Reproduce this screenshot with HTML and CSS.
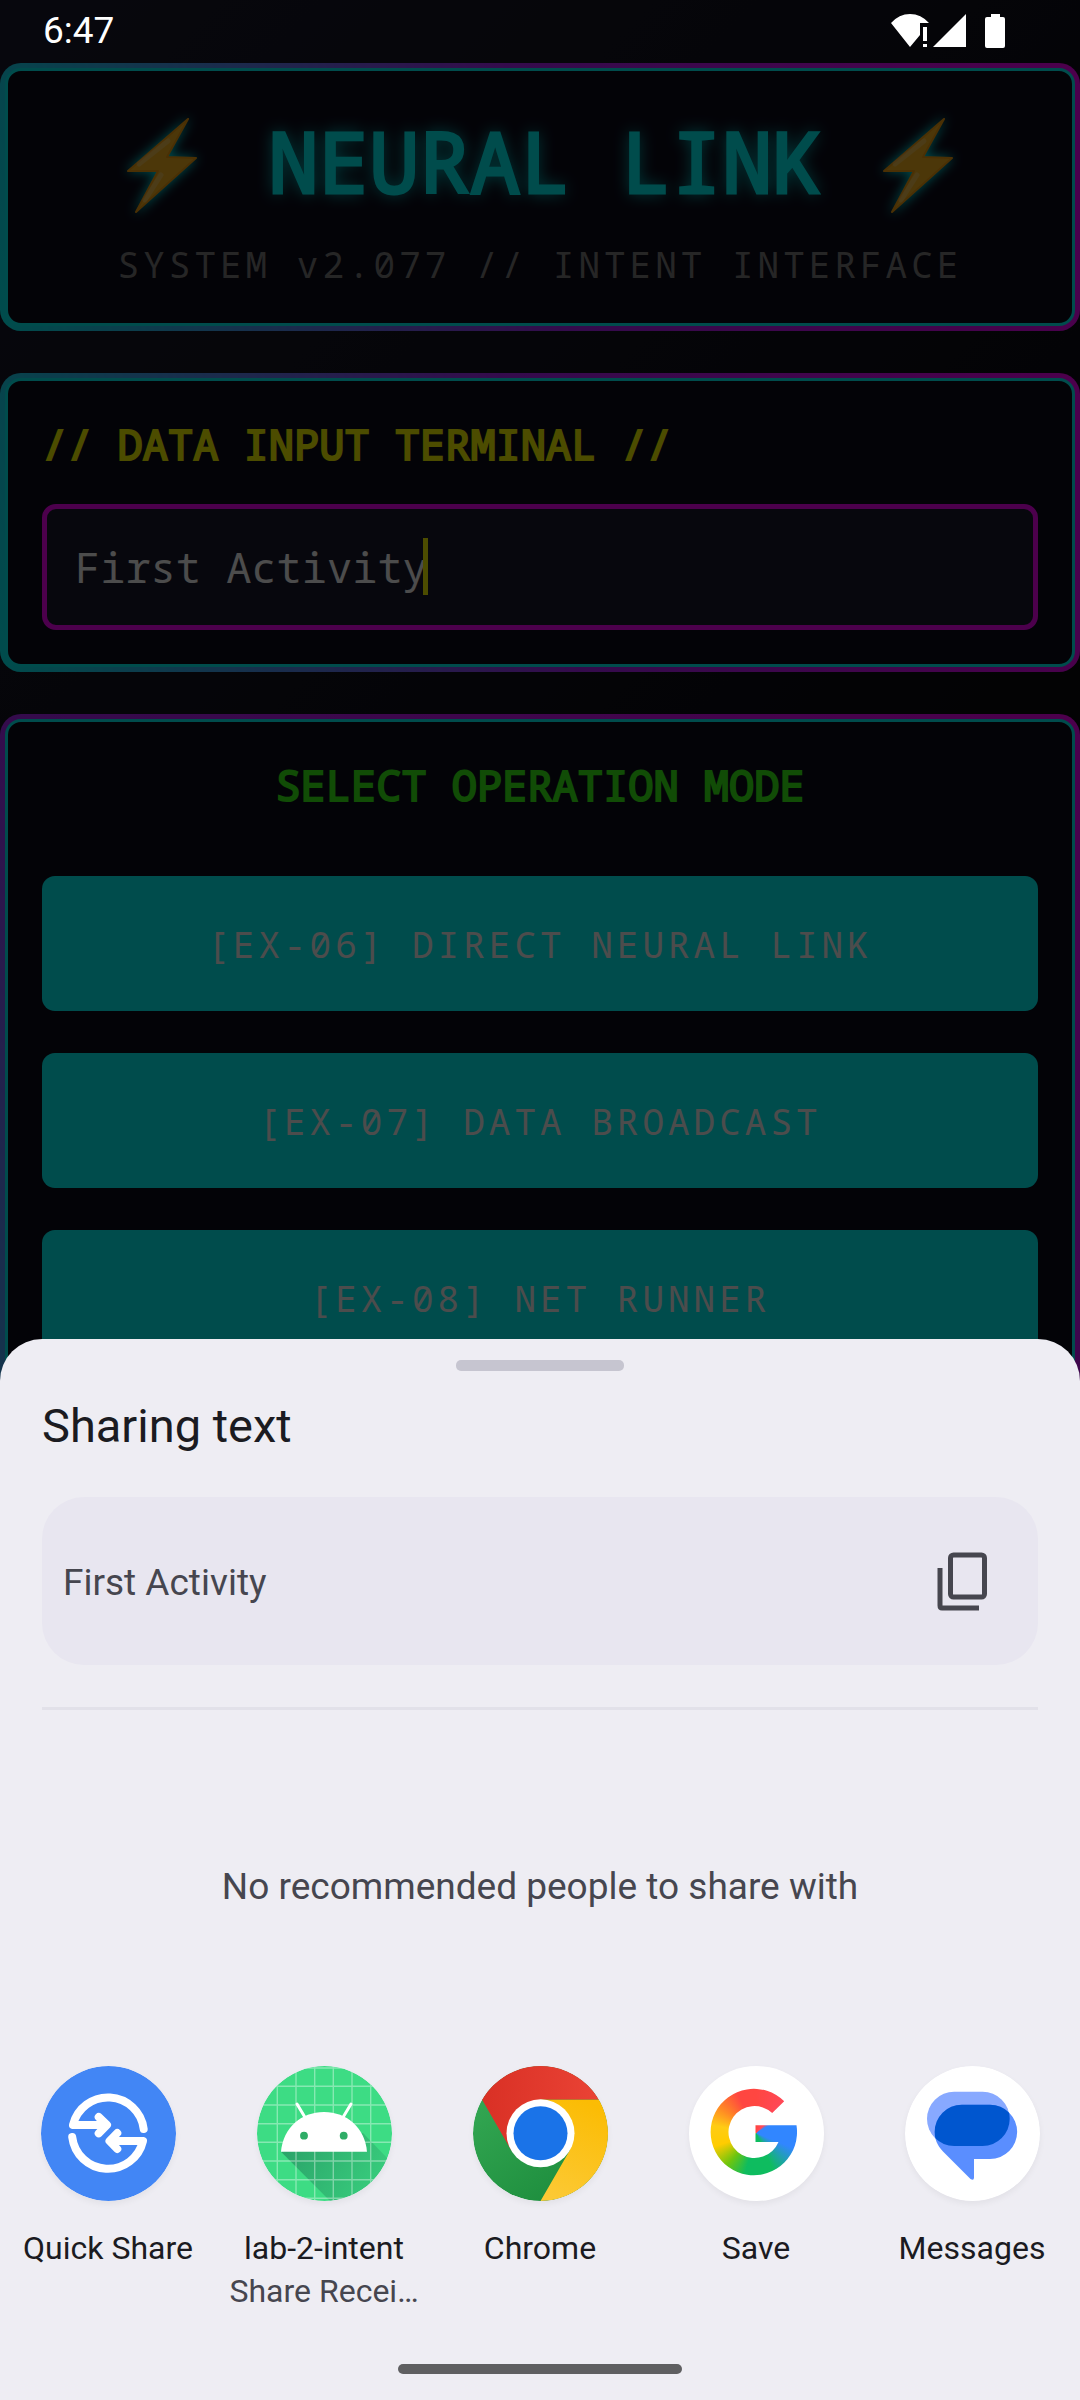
FILE: index.html
```html
<!DOCTYPE html>
<html lang="en">
<head>
<meta charset="utf-8">
<meta name="viewport" content="width=device-width, initial-scale=1">
<title>Neural Link</title>
<link rel="stylesheet" href="styles.css">
</head>
<body>
<header class="status">
  <span class="clock">6:47</span>
  <span class="status-icons">
    <svg width="38" height="34" viewBox="0 0 38 34" fill="#fff" aria-hidden="true"><path d="M0 9Q8 0 19 0T38 9H29V21L19 33Z"/><path d="M32 13h4v14h-4zM32 30h4v3h-4z"/></svg>
    <svg class="signal" width="33" height="34" viewBox="0 0 33 34" fill="#fff" aria-hidden="true"><path d="M33 0V33H0Z"/></svg>
    <svg width="20" height="34" viewBox="0 0 20 34" fill="#fff" aria-hidden="true"><path d="M6 0h9v3h3q2 0 2 2v27q0 2-2 2H2q-2 0-2-2V5q0-2 2-2h4z"/></svg>
  </span>
</header>

<main class="app">
  <section class="card card-title"><div class="card-body">
    <h1 class="title">
      <svg class="bolt" viewBox="0 0 104 104" aria-hidden="true"><path d="M78 5 18 57H48L26 98 86 44 57 43Z" fill="#ffba20" stroke="#f9a010" stroke-width="2" stroke-linejoin="round"/><path d="M29 50 58 27M51 61 35 86" stroke="#fff" stroke-opacity=".22" stroke-width="5" stroke-linecap="round"/></svg>
      <span class="title-text">NEURAL LINK</span>
      <svg class="bolt" viewBox="0 0 104 104" aria-hidden="true"><path d="M78 5 18 57H48L26 98 86 44 57 43Z" fill="#ffba20" stroke="#f9a010" stroke-width="2" stroke-linejoin="round"/><path d="M29 50 58 27M51 61 35 86" stroke="#fff" stroke-opacity=".22" stroke-width="5" stroke-linecap="round"/></svg>
    </h1>
    <p class="subtitle">SYSTEM v2.077 // INTENT INTERFACE</p>
  </div></section>

  <section class="card card-input"><div class="card-body">
    <label class="heading" for="data">// DATA INPUT TERMINAL //</label>
    <div class="field"><input id="data" type="text" value="First Activity"><span class="caret"></span></div>
  </div></section>

  <section class="card card-modes"><div class="card-body">
    <h2 class="heading heading-modes">SELECT OPERATION MODE</h2>
    <div class="modes">
      <button class="mode" type="button">[EX-06] DIRECT NEURAL LINK</button>
      <button class="mode" type="button">[EX-07] DATA BROADCAST</button>
      <button class="mode" type="button">[EX-08] NET RUNNER</button>
    </div>
  </div></section>
</main>

<div class="scrim"></div>

<section class="sheet" role="dialog" aria-labelledby="sheet-title">
  <div class="handle"></div>
  <h2 class="sheet-title" id="sheet-title">Sharing text</h2>
  <div class="preview">
    <span>First Activity</span>
    <button class="copy" type="button" aria-label="Copy">
      <svg width="50" height="59" viewBox="0 0 50 59" fill="none" stroke="#46464f" stroke-width="5" aria-hidden="true"><rect x="13.500" y="3" width="34" height="42" rx="3"/><path d="M3 16V53.500Q3 56 5 56H42"/></svg>
    </button>
  </div>
  <hr class="divider">
  <p class="empty">No recommended people to share with</p>
  <nav class="apps">
    <a class="target" href="#">
      <svg class="icon" viewBox="0 0 135 135" aria-hidden="true"><circle cx="67.500" cy="67.500" r="67.500" fill="#4286f5"/><g fill="none" stroke="#fff" stroke-width="8" stroke-linecap="round" stroke-linejoin="round"><path d="M102.700 63A36 36 0 0 0 32 59H65M57.700 51 66 59 57.700 67.300"/><path d="M31.200 71A36 36 0 0 0 102 75H70M76.300 67 68.500 75 76.300 83"/></g></svg>
      <span class="name">Quick Share</span>
    </a>
    <a class="target" href="#">
      <svg class="icon" viewBox="0 0 135 135" aria-hidden="true"><defs><clipPath id="disc"><circle cx="67.500" cy="67.500" r="67.500"/></clipPath><linearGradient id="shade" x1="35" y1="75" x2="115" y2="125" gradientUnits="userSpaceOnUse"><stop offset="0" stop-color="#1f7f58" stop-opacity=".6"/><stop offset="1" stop-color="#1f7f58" stop-opacity=".18"/></linearGradient></defs><g clip-path="url(#disc)"><path fill="#3ddc84" d="M0 0h135v135H0z"/><path d="M24 85.700 75 137H135V97L106 67Z" fill="url(#shade)"/><path d="M20.300 0V135M39 0V135M57.700 0V135M76.300 0V135M95 0V135M113.700 0V135M0 2H135M0 20.300H135M0 39H135M0 57.700H135M0 76.300H135M0 95H135M0 113.700H135M0 132.300H135" stroke="#fff" stroke-opacity=".38" stroke-width="1.400"/><path d="M24 85.700C26 62 44 46 67 46S108 62 110 85.700Z" fill="#fff"/><path d="M40 38 49 53M94 38 85 53" stroke="#fff" stroke-width="3" stroke-linecap="round"/><circle cx="47" cy="69.700" r="3.900" fill="#2fad67"/><circle cx="86.700" cy="69.700" r="3.900" fill="#2fad67"/></g></svg>
      <span class="name">lab-2-intent</span>
      <span class="detail">Share Recei…</span>
    </a>
    <a class="target" href="#">
      <svg class="icon" viewBox="0 0 135 135" aria-hidden="true"><defs><linearGradient id="red"><stop offset="0" stop-color="#d93025"/><stop offset="1" stop-color="#ea4335"/></linearGradient><linearGradient id="yellow" x1=".6" y1="0" x2=".3" y2="1"><stop offset="0" stop-color="#fbbc04"/><stop offset="1" stop-color="#fcc934"/></linearGradient><linearGradient id="green" x1="0" y1=".2" x2=".6" y2="1"><stop offset="0" stop-color="#34a853"/><stop offset="1" stop-color="#1e8e3e"/></linearGradient></defs><circle cx="67.500" cy="67.500" r="67.500" fill="url(#green)"/><path d="M67.500 33.500H126A67.500 67.500 0 0 1 67.500 135L97 84Z" fill="url(#yellow)"/><path d="M67.500 33.500H126A67.500 67.500 0 0 0 9 33.500L38.300 84.500 67.500 67Z" fill="url(#red)"/><circle cx="67.500" cy="67.300" r="34" fill="#fff"/><circle cx="67.500" cy="67.300" r="27" fill="#1a73e8"/></svg>
      <span class="name">Chrome</span>
    </a>
    <a class="target" href="#">
      <span class="icon icon-save"><span class="g-mark"></span></span>
      <span class="name">Save</span>
    </a>
    <a class="target" href="#">
      <svg class="icon" viewBox="0 0 135 135" aria-hidden="true"><defs><clipPath id="bubble"><rect x="22" y="25.700" width="82.700" height="54.300" rx="27.150"/></clipPath></defs><circle cx="67.500" cy="67.500" r="67.500" fill="#fff"/><rect x="22" y="25.700" width="82.700" height="54.300" rx="27.150" fill="#88a9ff"/><path d="M56.800 38.700H85A27.100 27.100 0 0 1 85 93H69V111.500Q69 115 65.500 113L38 85.500C32 79 29.700 73 29.700 66A27.200 27.200 0 0 1 56.800 38.700Z" fill="#5a8eff"/><path clip-path="url(#bubble)" d="M56.800 38.700H85A27.100 27.100 0 0 1 85 93H69L38 85.500C32 79 29.700 73 29.700 66A27.200 27.200 0 0 1 56.800 38.700Z" fill="#0056cf"/></svg>
      <span class="name">Messages</span>
    </a>
  </nav>
  <div class="home-bar"></div>
</section>
</body>
</html>
```
FILE: styles.css
```css
* { box-sizing: border-box; }

body {
  margin: 0;
  min-height: 100vh;
  position: relative;
  overflow: hidden;
  background: linear-gradient(135deg, #1a1a2e, #0a0a0f 50%);
  font-family: Roboto, sans-serif;
}

h1, h2, p { margin: 0; }

button, input { font: inherit; border: 0; padding: 0; }

.status {
  position: relative;
  z-index: 2;
  display: flex;
  justify-content: space-between;
  height: 63px;
  padding: 14px 75px 0 43px;
  color: #fff;
}

.clock { font-size: 37px; line-height: 34px; }

.status-icons { display: flex; gap: 4px; }
.signal { margin-right: 15px; }

.app {
  display: flex;
  flex-direction: column;
  gap: 42px;
  font-family: "Droid Sans Mono", "Noto Sans Mono", "DejaVu Sans Mono", monospace;
}

.card { padding: 5px; border-radius: 21px; }
.card-title { background: linear-gradient(76deg, #0ff, #b026ff, #f0f); }
.card-input { background: linear-gradient(75deg, #0ff, #b026ff, #f0f); }
.card-modes { background: linear-gradient(45deg, #0ff, #b026ff, #f0f); }

.card-body {
  display: flex;
  flex-direction: column;
  padding: 34px;
  border: 3px solid #0ff;
  border-radius: 16px;
  background: #0d0b1a;
}

.card-title .card-body { align-items: center; }

.title {
  display: flex;
  align-items: center;
  gap: 50px;
  height: 110px;
  font-size: 84px;
  font-weight: 400;
  color: #0ff;
  text-shadow: 0 0 16px #0ff;
  -webkit-text-stroke: 3px #0ff;
}

.title-text { margin: 0 -7px 0 4px; }

.bolt {
  width: 104px;
  height: 104px;
  margin-top: 12px;
  filter: drop-shadow(0 0 6px #0ff);
}

.subtitle {
  margin-top: 26px;
  font-size: 36px;
  line-height: 48px;
  letter-spacing: 4px;
  color: #808080;
}

.heading {
  padding-top: 1px;
  font-size: 42px;
  font-weight: 400;
  line-height: 56px;
  color: #ff0;
  -webkit-text-stroke: 2px #ff0;
}

.heading-modes {
  text-align: center;
  color: #39ff14;
  -webkit-text-stroke-color: #39ff14;
}

.field {
  display: flex;
  align-items: center;
  height: 126px;
  margin-top: 32px;
  padding: 0 28px 2px;
  border: 5px solid #f0f;
  border-radius: 14px;
  background: #1a1a2e;
}

.field input {
  width: 14ch;
  font-size: 42px;
  color: #fff;
  background: none;
  outline: 0;
}

.caret {
  width: 5px;
  height: 57px;
  margin-left: -5px;
  background: #ff0;
}

.card-modes .card-body { padding-bottom: 400px; }

.modes {
  display: flex;
  flex-direction: column;
  gap: 42px;
  margin-top: 63px;
}

.mode {
  height: 135px;
  padding-top: 2px;
  border-radius: 13px;
  background: #0ff;
  color: #fff;
  font-size: 36px;
  letter-spacing: 4px;
}

.scrim {
  position: absolute;
  inset: 0;
  background: rgba(0, 0, 0, .7);
}

.sheet {
  position: absolute;
  inset: auto 0 0;
  z-index: 3;
  display: flex;
  flex-direction: column;
  padding-top: 21px;
  border-radius: 42px 42px 0 0;
  background: #eeedf3;
  color: #1b1b21;
}

.handle {
  align-self: center;
  width: 168px;
  height: 11px;
  border-radius: 5px;
  background: #c6c5d0;
}

.sheet-title {
  margin: 27px 42px 0;
  font-size: 47px;
  font-weight: 400;
  line-height: 56px;
}

.preview {
  display: flex;
  align-items: center;
  justify-content: space-between;
  height: 168px;
  margin: 43px 42px 0;
  padding: 0 51px 0 21px;
  border-radius: 42px;
  background: #e8e6f0;
  color: #46464f;
  font-size: 37px;
}

.preview span { padding-top: 2px; }

.copy { background: none; }
.copy svg { display: block; }

.divider {
  height: 3px;
  margin: 42px 42px 0;
  border: 0;
  background: #e2e1e9;
}

.empty {
  margin-top: 155px;
  font-size: 37px;
  line-height: 44px;
  text-align: center;
  color: #46464f;
}

.apps {
  display: grid;
  grid-template-columns: repeat(5, 1fr);
  margin-top: 157px;
}

.target {
  display: flex;
  flex-direction: column;
  align-items: center;
  color: #1b1b21;
  font-size: 32px;
  line-height: 43px;
  text-decoration: none;
  white-space: nowrap;
}

.icon {
  width: 135px;
  height: 135px;
  margin-bottom: 26px;
  border-radius: 50%;
  box-shadow: 0 3px 6px rgba(0, 0, 0, .05);
}

.icon-save { background: #fff; }

.g-mark {
  display: block;
  width: 135px;
  height: 135px;
  background: conic-gradient(from 0deg at 67px 67px, #ff4641 0deg, #ff4858 45deg, #3186ff 60deg, #3186ff 112deg, #0ebc5f 155deg, #0ebc5f 195deg, #6cc50f 222deg, #fc0 252deg, #ffcc14 280deg, #ff8a24 305deg, #ff4641 335deg);
  clip-path: path("M95.700 35.300L83.700 47A26 26 0 1 0 90 76H67V59.300H108A43.200 43.200 0 1 1 95.700 35.300Z");
}

.detail { color: #46464f; }

.home-bar {
  align-self: center;
  width: 284px;
  height: 10px;
  margin: 51px 0 26px;
  border-radius: 5px;
  background: #5f5f61;
}
```
